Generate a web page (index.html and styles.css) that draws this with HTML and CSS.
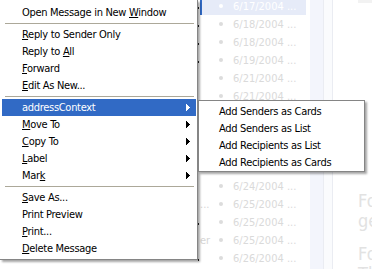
FILE: index.html
```html
<!DOCTYPE html>
<html>
    <head>
        <meta charset="UTF-8">
        <title>Message context menu</title>
        <link rel="stylesheet" href="styles.css">
    </head>
    <body>
        <div class="app">
            <div class="pane-left"></div>
            <div class="threads">
                <div class="row sel"><span class="tick"></span><div class="cell"><span class="tail"></span><span class="dot"></span><span class="date">6/17/2004 ...</span></div></div>
                <div class="row"><span class="tick"></span><div class="cell"><span class="tail"></span><span class="dot"></span><span class="date">6/18/2004 ...</span></div></div>
                <div class="row"><span class="tick"></span><div class="cell"><span class="tail"></span><span class="dot"></span><span class="date">6/18/2004 ...</span></div></div>
                <div class="row"><span class="tick"></span><div class="cell"><span class="tail"></span><span class="dot"></span><span class="date">6/19/2004 ...</span></div></div>
                <div class="row"><span class="tick off"></span><div class="cell"><span class="tail"></span><span class="dot"></span><span class="date">6/21/2004 ...</span></div></div>
                <div class="row"><span class="tick off"></span><div class="cell"><span class="tail"></span><span class="dot"></span><span class="date">6/21/2004 ...</span></div></div>
                <div class="row"><span class="tick off"></span><div class="cell"></div></div>
                <div class="row"><span class="tick off"></span><div class="cell"></div></div>
                <div class="row"><span class="tick off"></span><div class="cell"></div></div>
                <div class="row"><span class="tick off"></span><div class="cell"></div></div>
                <div class="row"><span class="tick off"></span><div class="cell"><span class="tail"></span><span class="dot"></span><span class="date">6/24/2004 ...</span></div></div>
                <div class="row"><span class="tick off"></span><div class="cell"><span class="tail">...</span><span class="dot"></span><span class="date">6/25/2004 ...</span></div></div>
                <div class="row"><span class="tick"></span><div class="cell"><span class="tail"></span><span class="dot"></span><span class="date">6/25/2004 ...</span></div></div>
                <div class="row"><span class="tick off"></span><div class="cell"><span class="tail">er</span><span class="dot"></span><span class="date">6/25/2004 ...</span></div></div>
                <div class="row"><span class="tick"></span><div class="cell"><span class="tail"></span><span class="dot"></span><span class="date">6/26/2004 ...</span></div></div>
            </div>
            <div class="scroll">
                <div class="gap"></div>
                <div class="track"></div>
                <div class="line"></div>
                <div class="split"></div>
                <div class="line"></div>
            </div>
            <div class="preview">
                <div class="top-bit"></div>
                <p>Fo<br>ge</p>
                <p>Fo<br>Th</p>
            </div>
        </div>

        <div class="menu main">
            <div class="item">Open Message in New <u>W</u>indow</div>
            <div class="sep"></div>
            <div class="item"><u>R</u>eply to Sender Only</div>
            <div class="item">Reply to <u>A</u>ll</div>
            <div class="item"><u>F</u>orward</div>
            <div class="item"><u>E</u>dit As New...</div>
            <div class="sep"></div>
            <div class="item hl">addressContext<svg class="arrow" width="4" height="7" viewBox="0 0 4 7"><path d="M0 0h1v7h-1z M1 1h1v5h-1z M2 2h1v3h-1z M3 3h1v1h-1z"/></svg></div>
            <div class="item"><u>M</u>ove To<svg class="arrow" width="4" height="7" viewBox="0 0 4 7"><path d="M0 0h1v7h-1z M1 1h1v5h-1z M2 2h1v3h-1z M3 3h1v1h-1z"/></svg></div>
            <div class="item"><u>C</u>opy To<svg class="arrow" width="4" height="7" viewBox="0 0 4 7"><path d="M0 0h1v7h-1z M1 1h1v5h-1z M2 2h1v3h-1z M3 3h1v1h-1z"/></svg></div>
            <div class="item"><u>L</u>abel<svg class="arrow" width="4" height="7" viewBox="0 0 4 7"><path d="M0 0h1v7h-1z M1 1h1v5h-1z M2 2h1v3h-1z M3 3h1v1h-1z"/></svg></div>
            <div class="item">Mar<u>k</u><svg class="arrow" width="4" height="7" viewBox="0 0 4 7"><path d="M0 0h1v7h-1z M1 1h1v5h-1z M2 2h1v3h-1z M3 3h1v1h-1z"/></svg></div>
            <div class="sep"></div>
            <div class="item"><u>S</u>ave As...</div>
            <div class="item">Print Preview</div>
            <div class="item"><u>P</u>rint...</div>
            <div class="item"><u>D</u>elete Message</div>
        </div>

        <div class="menu sub">
            <div class="item">Add Senders as Cards</div>
            <div class="item">Add Senders as List</div>
            <div class="item">Add Recipients as List</div>
            <div class="item">Add Recipients as Cards</div>
        </div>
    </body>
</html>
```

FILE: styles.css
```css
body {
    margin:0;
    padding:0;
    width:372px;
    height:269px;
    overflow:hidden;
    background:#fff;
    font-family:"DejaVu Sans Condensed", "DejaVu Sans", sans-serif;
    font-size:11px;
    color:#000;
}
.app {
    display:flex;
    height:269px;
    overflow:hidden;
}
.pane-left {
    width:198px;
    flex:none;
}
.threads {
    width:108px;
    flex:none;
    margin-top:-3px;
}
.row {
    display:flex;
    height:18px;
}
.tick {
    width:1px;
    height:2px;
    margin-top:10px;
    margin-right:1px;
    background:#222;
    flex:none;
}
.tick.off {
    background:transparent;
}
.cell {
    flex:1;
    display:flex;
    align-items:center;
    color:#dadada;
}
.row.sel .cell {
    background:linear-gradient(to right, #316ac5 2px, #e6ebf8 2px);
    color:#fff;
}
.tail {
    width:19px;
    flex:none;
    overflow:hidden;
    white-space:nowrap;
    color:#d6d6d6;
}
.dot {
    width:4px;
    height:4px;
    border-radius:50%;
    background:#dcdcdc;
    flex:none;
}
.row.sel .dot {
    background:#fff;
}
.date {
    margin-left:10px;
    white-space:nowrap;
}
.scroll {
    display:flex;
    flex:none;
    width:28px;
}
.gap {
    width:4px;
}
.track {
    width:13px;
    background:#f3f5fc;
}
.line {
    width:1px;
    background:#eaecf2;
}
.split {
    width:8px;
    background:#fafbfd;
}
.preview {
    flex:1;
    position:relative;
    overflow:hidden;
    padding-left:24px;
    font-size:18px;
    line-height:20px;
    color:#e2e2e2;
    white-space:nowrap;
}
.preview p {
    margin:0;
}
.preview p:first-of-type {
    margin-top:191px;
}
.preview p + p {
    margin-top:13px;
}
.top-bit {
    position:absolute;
    right:0;
    top:0;
    width:14px;
    height:3px;
    background:#f2f2f2;
}
.menu {
    position:absolute;
    background:#fff;
    box-shadow:2px 2px 2px rgba(0,0,0,0.35);
    letter-spacing:-0.3px;
}
.menu.main {
    left:0;
    top:0;
    width:194px;
    padding:4px 1px 2px 2px;
    border-right:1px solid #858585;
    border-bottom:1px solid #858585;
}
.menu.sub {
    left:198px;
    top:100px;
    width:165px;
    padding:2px 0 0 0;
    border:1px solid #858585;
}
.item {
    position:relative;
    height:17px;
    line-height:17px;
    padding-left:20px;
    white-space:nowrap;
}
.item.hl {
    background:#316ac5;
    color:#fff;
}
.arrow {
    position:absolute;
    right:6px;
    top:5px;
    fill:currentColor;
}
.sep {
    height:1px;
    margin:2px 2px 2px 3px;
    background:#aca899;
}
```
